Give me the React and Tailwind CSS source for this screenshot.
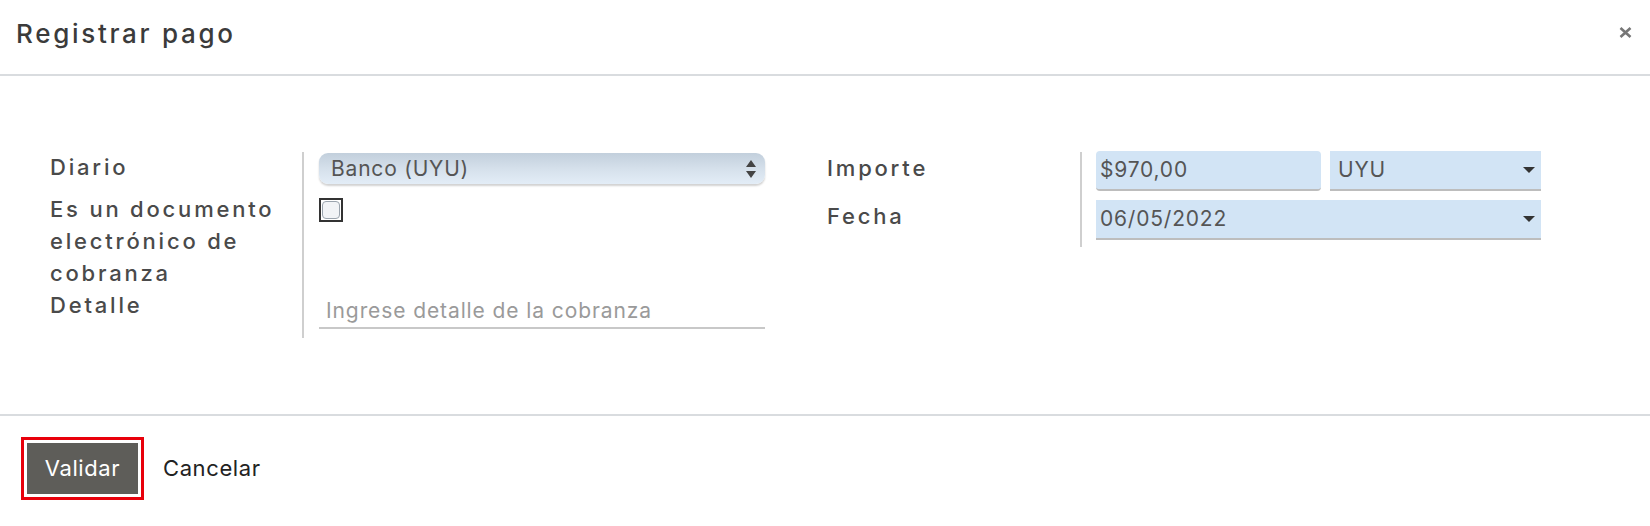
import React from "react";

const font = { fontFamily: "Inter, 'Noto Sans', sans-serif" };

const Caret = () => (
  <svg width="12" height="6" viewBox="0 0 12 6" className="shrink-0">
    <path d="M0 0 L12 0 L6 6 Z" fill="#333" />
  </svg>
);

const RegistrarPago = () => {
  return (
    <div className="w-[1650px] h-[526px] bg-white flex flex-col text-[#4a4a4a]" style={font}>
      {/* header */}
      <div className="h-[76px] shrink-0 border-b-2 border-[#d9dcdf] flex items-start justify-between pl-4 pr-[18px]">
        <h1 className="mt-[18px] text-[26px] leading-[32px] font-medium tracking-[2.7px] text-[#3b3b3b]">Registrar pago</h1>
        <button className="mt-[27px]">
          <svg width="13" height="11" viewBox="0 0 13 11">
            <path d="M1.5 1 L11.5 10 M11.5 1 L1.5 10" stroke="#767676" strokeWidth="2.6" />
          </svg>
        </button>
      </div>

      {/* body */}
      <div className="h-[340px] shrink-0 border-b-2 border-[#d9dcdf] pt-[76px] flex">
        {/* left group */}
        <div className="ml-[50px] w-[715px] grid grid-cols-[252px_463px] self-start">
          <div className="h-[41px] text-[22px] leading-[32px] font-medium tracking-[2.8px] -mt-px">Diario</div>
          <div className="h-[41px] border-l-2 border-[#cfcfcf] pl-[15px]">
            <div className="mt-px h-[31px] rounded-[9px] bg-gradient-to-b from-[#c2cfdc] via-[#d5e0eb] to-[#e3edf7] shadow-[0_2px_2px_rgba(0,0,0,0.18)] flex items-center justify-between pl-3 pr-[9px]">
              <span className="text-[21px] tracking-[0.8px] text-[#555]">Banco (UYU)</span>
              <svg width="10" height="20" viewBox="0 0 10 20">
                <path d="M5 1 L10 8 L0 8 Z M0 12 L10 12 L5 19 Z" fill="#444" />
              </svg>
            </div>
          </div>

          <div className="h-[96px] text-[22px] leading-[32px] font-medium tracking-[2.8px] whitespace-nowrap">
            Es un documento
            <br />
            electrónico de
            <br />
            cobranza
          </div>
          <div className="h-[96px] border-l-2 border-[#cfcfcf] pl-[15px]">
            <div className="mt-[5px] w-6 h-6 border-2 border-[#333] bg-white p-px">
              <div className="w-full h-full rounded-[4px] border border-[#9aa3ad] bg-[#f1f3f6]" />
            </div>
          </div>

          <div className="h-[49px] text-[22px] leading-[32px] font-medium tracking-[2.8px]">Detalle</div>
          <div className="h-[49px] border-l-2 border-[#cfcfcf] pl-[15px]">
            <input
              type="text"
              placeholder="Ingrese detalle de la cobranza"
              className="w-[446px] h-10 border-b-2 border-[#c8c8c8] pl-[7px] pt-[4px] text-[21px] tracking-[0.9px] text-[#555] placeholder:text-[#9a9a9a] outline-none"
            />
          </div>
        </div>

        {/* right group */}
        <div className="ml-[62px] w-[714px] grid grid-cols-[253px_461px] self-start">
          <div className="h-[48px] text-[22px] leading-[32px] font-medium tracking-[2.8px]">Importe</div>
          <div className="h-[48px] border-l-2 border-[#cfcfcf] pl-[14px] flex gap-[9px]">
            <div className="w-[225px] h-10 -mt-px rounded-[4px] bg-[#d2e4f5] border-b-2 border-[#bdbdbd] flex items-center pl-[4px] text-[21px] tracking-[0.8px] text-[#555]">
              $970,00
            </div>
            <div className="w-[211px] h-10 -mt-px bg-[#d2e4f5] border-b-2 border-[#bdbdbd] flex items-center justify-between pl-[8px] pr-[6px] text-[21px] tracking-[0.8px] text-[#555]">
              UYU
              <Caret />
            </div>
          </div>

          <div className="h-[47px] text-[22px] leading-[32px] font-medium tracking-[2.8px]">Fecha</div>
          <div className="h-[47px] border-l-2 border-[#cfcfcf] pl-[14px]">
            <div className="w-[445px] h-10 bg-[#d2e4f5] border-b-2 border-[#bdbdbd] flex items-center justify-between pl-[4px] pr-[6px] text-[21px] tracking-[0.8px] text-[#555]">
              06/05/2022
              <Caret />
            </div>
          </div>
        </div>
      </div>

      {/* footer */}
      <div className="flex items-center pl-[21px] pt-[21px] gap-[19px]">
        <div className="border-[3px] border-[#e8000b] p-[3px]">
          <button className="w-[111px] h-[51px] bg-[#5e5d59] text-white text-[22px] tracking-[0.6px]">Validar</button>
        </div>
        <button className="text-[22px] tracking-[0.6px] text-[#222]">Cancelar</button>
      </div>
    </div>
  );
};

export default RegistrarPago;
